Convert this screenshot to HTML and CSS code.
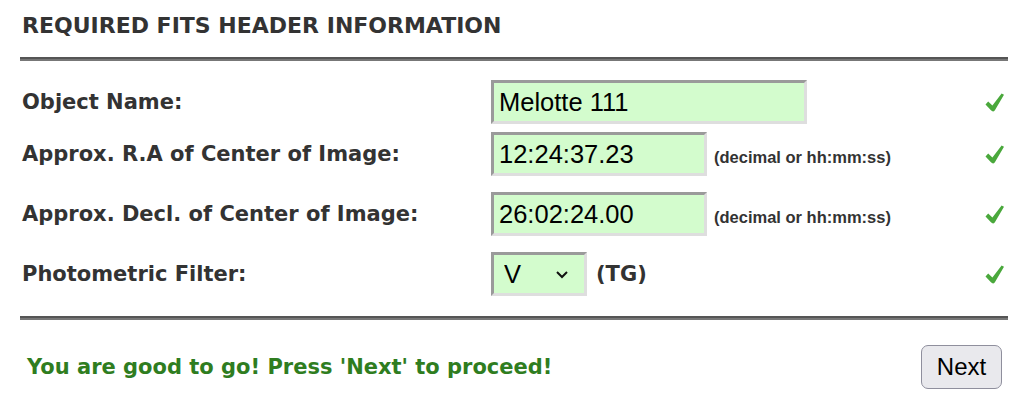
FILE: index.html
```html
<!DOCTYPE html>
<html>
<head>
<meta charset="utf-8">
<link rel="stylesheet" href="styles.css">
</head>
<body>
<div class="panel">
  <h2 class="title">REQUIRED FITS HEADER INFORMATION</h2>
  <div class="rule"></div>
  <div class="rows">
    <div class="row row-first">
      <label class="label">Object Name:</label>
      <div class="field"><input class="box box-wide" type="text" value="Melotte 111"></div>
      <svg class="check" width="19" height="19" viewBox="0 0 19 19"><path d="M0.5 11.5 L3.2 8.6 L7.4 12.4 L16.6 0.6 L19 1.8 L9.9 17.2 Q8.2 19.4 6.2 17.6 Z" fill="#4aa83c"/></svg>
    </div>
    <div class="row">
      <label class="label">Approx. R.A of Center of Image:</label>
      <div class="field"><input class="box box-mid" type="text" value="12:24:37.23"><span class="hint">(decimal or hh:mm:ss)</span></div>
      <svg class="check" width="19" height="19" viewBox="0 0 19 19"><path d="M0.5 11.5 L3.2 8.6 L7.4 12.4 L16.6 0.6 L19 1.8 L9.9 17.2 Q8.2 19.4 6.2 17.6 Z" fill="#4aa83c"/></svg>
    </div>
    <div class="row">
      <label class="label">Approx. Decl. of Center of Image:</label>
      <div class="field"><input class="box box-mid" type="text" value="26:02:24.00"><span class="hint">(decimal or hh:mm:ss)</span></div>
      <svg class="check" width="19" height="19" viewBox="0 0 19 19"><path d="M0.5 11.5 L3.2 8.6 L7.4 12.4 L16.6 0.6 L19 1.8 L9.9 17.2 Q8.2 19.4 6.2 17.6 Z" fill="#4aa83c"/></svg>
    </div>
    <div class="row">
      <label class="label">Photometric Filter:</label>
      <div class="field">
        <div class="select-wrap">
          <select class="box box-select"><option>V</option><option>B</option><option>R</option></select>
          <svg class="chev" width="14" height="9" viewBox="0 0 14 9"><path d="M2 2 L7 7 L12 2" fill="none" stroke="#111" stroke-width="2"/></svg>
        </div>
        <span class="tg">(TG)</span>
      </div>
      <svg class="check" width="19" height="19" viewBox="0 0 19 19"><path d="M0.5 11.5 L3.2 8.6 L7.4 12.4 L16.6 0.6 L19 1.8 L9.9 17.2 Q8.2 19.4 6.2 17.6 Z" fill="#4aa83c"/></svg>
    </div>
  </div>
  <div class="rule rule-bottom"></div>
  <div class="footer">
    <span class="ok">You are good to go! Press 'Next' to proceed!</span>
    <button class="next">Next</button>
  </div>
</div>
</body>
</html>
```

FILE: styles.css
```css
html, body {
  margin: 0;
  padding: 0;
  background: #ffffff;
}

.panel {
  width: 988px;
  margin-left: 20px;
  font-family: "DejaVu Sans", Verdana, sans-serif;
  color: #333333;
}

.title {
  margin: 0;
  padding: 13px 0 0 2px;
  height: 43px;
  box-sizing: border-box;
  font-size: 22px;
  font-weight: bold;
  line-height: 26px;
  color: #333333;
}

.rule {
  margin-top: 14px;
  height: 4px;
  background: linear-gradient(#555555 0 50%, #777777 50% 100%);
}

.rule-bottom {
  margin-top: 20px;
}

.rows {
  display: flex;
  flex-direction: column;
  gap: 16px;
  margin-top: 19px;
}

.row {
  display: flex;
  align-items: center;
  height: 44px;
}

.row-first {
  margin-bottom: -8px;
}

.label {
  width: 471px;
  padding-left: 2px;
  box-sizing: border-box;
  font-size: 21px;
  font-weight: bold;
  color: #333333;
}

.field {
  flex: 1;
  display: flex;
  align-items: center;
  height: 100%;
}

.box {
  box-sizing: border-box;
  height: 44px;
  border-style: solid;
  border-width: 3px;
  border-color: #9a9a9a #dedede #dedede #9a9a9a;
  background: #d3fccd;
  font-family: "Liberation Sans", Arial, sans-serif;
  font-size: 25.5px;
  color: #000000;
  padding: 0 0 0 5px;
  margin: 0;
  outline: none;
}

.box-wide {
  width: 316px;
}

.box-mid {
  width: 216px;
}

.hint {
  margin-left: 7px;
  padding-top: 6px;
  font-family: "Liberation Sans", Arial, sans-serif;
  font-weight: bold;
  font-size: 16.5px;
  color: #333333;
}

.select-wrap {
  position: relative;
  height: 44px;
}

.box-select {
  width: 96px;
  appearance: none;
  -webkit-appearance: none;
  padding-left: 10px;
  border-radius: 0;
}

.chev {
  position: absolute;
  left: 64px;
  top: 18px;
  pointer-events: none;
}

.tg {
  margin-left: 9px;
  font-size: 21px;
  font-weight: bold;
  color: #333333;
}

.check {
  margin-right: 4px;
  flex: none;
}

.footer {
  display: flex;
  align-items: center;
  justify-content: space-between;
  margin-top: 25px;
  height: 44px;
}

.ok {
  padding-left: 7px;
  font-size: 21px;
  font-weight: bold;
  color: #2f7d1f;
}

.next {
  width: 81px;
  height: 44px;
  margin-right: 6px;
  border: 1.5px solid #8f8f9d;
  border-radius: 7px;
  background: #e9e9ed;
  font-family: "Liberation Sans", Arial, sans-serif;
  font-size: 24px;
  color: #000000;
  padding: 0;
}
```
